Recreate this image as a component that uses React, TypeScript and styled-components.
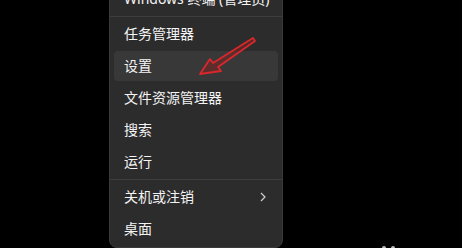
import { Fragment } from 'react'
import styled, { createGlobalStyle } from 'styled-components'

const GlobalStyle = createGlobalStyle`
  html, body {
    margin: 0;
    padding: 0;
    background: #000;
  }
`

const Page = styled.div`
  position: relative;
  width: 462px;
  height: 248px;
  overflow: hidden;
  background: #000;
  padding-left: 109px;
  box-sizing: border-box;
  font-family: "Noto Sans", "Noto Sans CJK SC", sans-serif;
`

const Menu = styled.div`
  width: 174px;
  margin-top: -21px;
  padding: 4px 4px 3px;
  box-sizing: border-box;
  background: #2c2c2c;
  border: 1px solid #3a3a3a;
  border-radius: 8px;
  display: flex;
  flex-direction: column;
`

const Item = styled.div<{ $active?: boolean }>`
  height: 30px;
  margin-bottom: 2px;
  padding: 0 12px 0 10px;
  display: flex;
  align-items: center;
  justify-content: space-between;
  border-radius: 4px;
  background: ${(p) => (p.$active ? '#383838' : 'transparent')};
  color: #f4f4f4;
  font-size: 14px;
  line-height: 1;
  white-space: nowrap;

  &:last-child {
    margin-bottom: 0;
  }
`

const Separator = styled.div`
  height: 1px;
  margin: 0 -4px 2px;
  background: #3e3e3e;
`

const Overlay = styled.svg`
  position: absolute;
  left: 0;
  top: 0;
  pointer-events: none;
`

const Chevron = () => (
  <svg width="6" height="10" viewBox="0 0 6 10">
    <path d="M1 1 L5 5 L1 9" fill="none" stroke="#cfcfcf" strokeWidth="1.2" />
  </svg>
)

const items: { label: string; active?: boolean; sub?: boolean; sepBefore?: boolean }[] = [
  { label: 'Windows 终端 (管理员)' },
  { label: '任务管理器', sepBefore: true },
  { label: '设置', active: true },
  { label: '文件资源管理器' },
  { label: '搜索' },
  { label: '运行' },
  { label: '关机或注销', sub: true, sepBefore: true },
  { label: '桌面' },
]

export default function App() {
  return (
    <>
      <GlobalStyle />
      <Page>
        <Menu>
          {items.map((it) => (
            <Fragment key={it.label}>
              {it.sepBefore && <Separator />}
              <Item $active={it.active}>
                <span>{it.label}</span>
                {it.sub && <Chevron />}
              </Item>
            </Fragment>
          ))}
        </Menu>
        {/* red pointer arrow drawn over the screenshot */}
        <Overlay width="462" height="248" viewBox="0 0 462 248">
          <polygon
            points="255,41 218,67 221,71 200,74 210,59 213,63 253,38"
            fill="rgba(150,30,30,0.4)"
            stroke="#d8282c"
            strokeWidth="1.8"
            strokeLinejoin="round"
          />
          <circle cx="384" cy="248" r="2" fill="#bdbdbd" />
          <circle cx="393" cy="248" r="2" fill="#bdbdbd" />
        </Overlay>
      </Page>
    </>
  )
}
